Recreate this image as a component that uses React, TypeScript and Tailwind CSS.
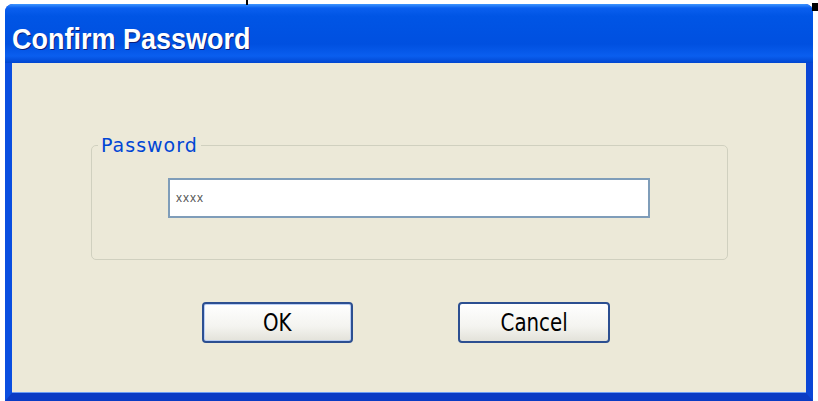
export default function App() {
  return (
    <div className="relative w-[818px] h-[401px] bg-white overflow-hidden pt-[4px] pl-[5px]">
      {/* stray marks from the original capture */}
      <div className="absolute left-[246px] top-0 w-[2px] h-[5px] bg-black" />
      <div className="absolute right-0 top-[3px] w-[6px] h-[8px] bg-black" />

      <div className="w-[808px] h-[397px] flex flex-col rounded-t-[8px] overflow-hidden bg-[#0831d9]">
        {/* TITLE BAR */}
        <div className="h-[59px] flex items-center px-[7px] bg-[linear-gradient(to_bottom,#3d95ff_0px,#0a5fef_4px,#0055e5_12px,#0050e0_40px,#0a5eef_52px,#0046d0_59px)]">
          <span className="inline-block text-white font-bold text-[27px] leading-none font-['Liberation_Sans',sans-serif] [text-shadow:1px_1px_0_#0a1e7a] mt-[12px] scale-y-[1.1] origin-left">
            Confirm Password
          </span>
        </div>

        {/* BODY */}
        <div className="flex-1 flex flex-col border-l-[7px] border-r-[7px] border-b-[8px] border-l-[#0a4ee0] border-r-[#0a46d6] border-b-[#0a3bc4]">
          <div className="flex-1 flex flex-col bg-[#ece9d8] border-b border-b-[#6b9cf5] font-['DejaVu_Sans',sans-serif]">
            <fieldset className="mt-[72px] ml-[79px] w-[637px] h-[125px] border border-[#d0d0bf] rounded-[5px] px-0 pb-0">
              <legend className="ml-[6px] px-[3px] text-[19px] leading-[20px] tracking-[1px] text-[#0046d5] font-['DejaVu_Sans',sans-serif]">
                Password
              </legend>
              <div className="mt-[23px] ml-[76px] w-[482px] h-[40px] bg-white border-2 border-[#7f9db9] flex items-center px-[6px]">
                <span className="text-[12px] text-[#555] tracking-[1px] font-['Liberation_Sans',sans-serif]">xxxx</span>
              </div>
            </fieldset>

            <div className="mt-[42px] ml-[190px] flex gap-[105px]">
              <button className="w-[151px] h-[41px] rounded-[4px] border-2 border-[#2c4f91] bg-[linear-gradient(to_bottom,#ffffff,#f4f4f0_60%,#e3e2da)] shadow-[inset_0_0_0_1px_#b8cdf5] flex items-center justify-center">
                <span className="inline-block scale-x-[0.88] text-[25px] leading-none text-black font-['DejaVu_Sans_Condensed','DejaVu_Sans',sans-serif]">
                  OK
                </span>
              </button>
              <button className="w-[152px] h-[41px] rounded-[4px] border-2 border-[#2c4f91] bg-[linear-gradient(to_bottom,#ffffff,#f4f4f0_60%,#e3e2da)] flex items-center justify-center">
                <span className="inline-block scale-x-[0.88] text-[25px] leading-none text-black font-['DejaVu_Sans_Condensed','DejaVu_Sans',sans-serif]">
                  Cancel
                </span>
              </button>
            </div>
          </div>
        </div>
      </div>
    </div>
  );
}
